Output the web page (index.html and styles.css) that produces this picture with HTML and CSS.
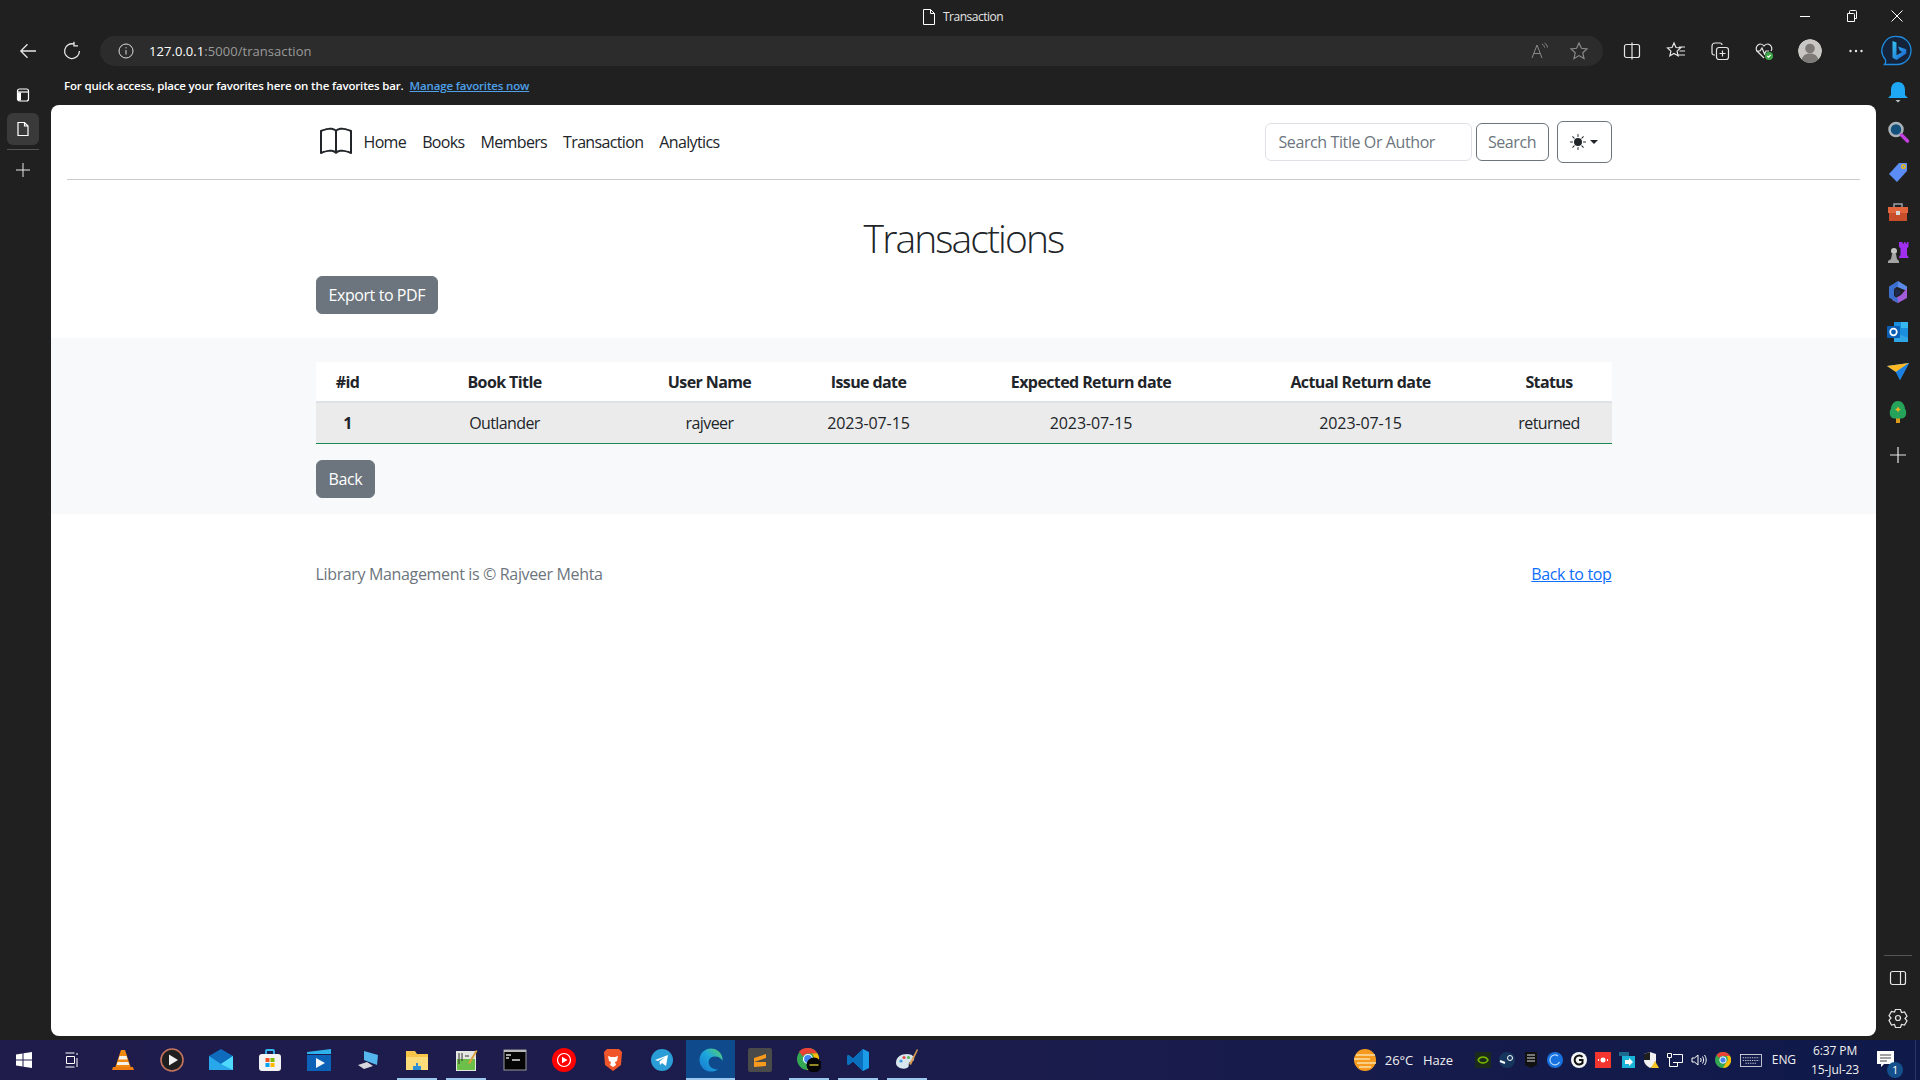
FILE: index.html
```html
<!DOCTYPE html>
<html lang="en">
<head>
  <meta charset="UTF-8">
  <title>Transaction</title>
  <link rel="stylesheet" href="styles.css">
</head>
<body>
  <div class="titlebar">
    <div class="tab-title">
      <svg class="ico-16" viewBox="0 0 16 16" fill="none" stroke="#fff" stroke-width="1"><path d="M2.500 .5h7l4 4v11h-11zM9.500 .5v4h4"/></svg>
      <span>Transaction</span>
    </div>
    <div class="win-controls">
      <svg class="ico-16" viewBox="0 0 16 16" stroke="#fff" stroke-width="1"><path d="M3 8.500h10"/></svg>
      <svg class="ico-16" viewBox="0 0 16 16" fill="none" stroke="#fff" stroke-width="1"><path d="M4.500 5.500h6a1 1 0 0 1 1 1v7h-7zM6.500 5V3.500a1 1 0 0 1 1-1h5a1 1 0 0 1 1 1v7h-2"/></svg>
      <svg class="ico-16" viewBox="0 0 16 16" stroke="#fff" stroke-width="1"><path d="M2.500 2.500l11 11M13.500 2.500l-11 11"/></svg>
    </div>
  </div>

  <div class="toolbar">
    <button class="tool-btn back-btn">
      <svg class="ico-20" viewBox="0 0 20 20" fill="none" stroke="#e6e6e6" stroke-width="1.300"><path d="M18 10H3M9.500 3.200L2.800 10l6.700 6.800"/></svg>
    </button>
    <button class="tool-btn">
      <svg class="ico-20" viewBox="0 0 20 20" fill="none" stroke="#e6e6e6" stroke-width="1.300"><path d="M12.500 3.200A7.400 7.400 0 1 0 17.400 10M12 .8v4h4"/></svg>
    </button>
    <div class="address">
      <svg class="ico-16" viewBox="0 0 16 16" fill="none" stroke="#dcdcdc" stroke-width="1"><circle cx="8" cy="8" r="7"/><path d="M8 7v4.500M8 4.200v1.200"/></svg>
      <span class="url"><b>127.0.0.1</b>:5000/transaction</span>
      <svg class="ico-20 addr-read" viewBox="0 0 20 20" fill="none" stroke="#8a8a8a" stroke-width="1"><path d="M3 17L8 4l5 13M5 12.500h6M13 3c1.500.8 2.300 2 2.500 3.600M15.500 2c1.700 1 2.700 2.500 3 4.500"/></svg>
      <svg class="ico-20 addr-star" viewBox="0 0 20 20" fill="none" stroke="#8a8a8a" stroke-width="1.200"><path d="M10 2l2.400 5.300 5.600.6-4.200 3.900 1.200 5.700-5-2.900-5 2.900 1.200-5.700L2 7.900l5.600-.6z"/></svg>
    </div>
    <div class="tool-icons">
      <svg class="ico-20" viewBox="0 0 20 20" fill="none" stroke="#e6e6e6" stroke-width="1.200"><rect x="2.500" y="3.500" width="15" height="13" rx="2"/><path d="M10 1.500v17"/></svg>
      <svg class="ico-20" viewBox="0 0 20 20" fill="none" stroke="#e6e6e6" stroke-width="1.200"><path d="M8 2l2 4.500 4.500.5-3.400 3.100 1 4.700L8 12.400l-4.100 2.400 1-4.700L1.500 7 6 6.500zM13 6h6M13.500 10H19M12.500 14H19"/></svg>
      <svg class="ico-20" viewBox="0 0 20 20" fill="none" stroke="#e6e6e6" stroke-width="1.200"><path d="M5 14H4a2 2 0 0 1-2-2V5a3 3 0 0 1 3-3h5a2 2 0 0 1 2 2"/><rect x="6.500" y="6.500" width="12" height="12" rx="2.500"/><path d="M12.500 9.500v6M9.500 12.500h6"/></svg>
      <svg class="ico-20" viewBox="0 0 20 20" fill="none" stroke="#e6e6e6" stroke-width="1.200"><path d="M10 17L3 10a4.300 4.300 0 0 1 7-5 4.300 4.300 0 0 1 7 5M2 10h4l2-3 2.500 6 1.500-3h3"/><circle cx="15" cy="15" r="4" fill="#3fa648" stroke="none"/><path d="M13.300 15l1.200 1.200 2.200-2.400" stroke="#fff"/></svg>
      <svg class="avatar" viewBox="0 0 24 24"><circle cx="12" cy="12" r="12" fill="#c9c7c4"/><circle cx="12" cy="9.500" r="4.800" fill="#7d7a77"/><path d="M3.500 20.500c1.500-4.500 5-6 8.500-6s7 1.500 8.500 6a12 12 0 0 1-17 0z" fill="#7d7a77"/></svg>
      <svg class="ico-20" viewBox="0 0 20 20" fill="#e6e6e6"><circle cx="4.500" cy="10" r="1.200"/><circle cx="10" cy="10" r="1.200"/><circle cx="15.500" cy="10" r="1.200"/></svg>
      <svg class="bing" viewBox="0 0 32 32">
        <defs><linearGradient id="bingFill" x1="0" y1="0" x2="1" y2="1"><stop offset="0" stop-color="#36c3f0"/><stop offset="1" stop-color="#1a5fd0"/></linearGradient></defs>
        <path d="M16 1.500a14 14 0 0 1 14 14c0 8-6.500 14-14 14H3.500c1.500-1.500 1.500-3 .8-5A14 14 0 0 1 16 1.500z" fill="#14233a" stroke="#1e8be0" stroke-width="1.300"/>
        <path d="M11.500 6l4 1.400v12.800l5.800-3.300-2.600-1.300-1.700-4.200 8.300 2.900v4.300L15.500 25l-4-2.200z" fill="url(#bingFill)"/>
      </svg>
    </div>
  </div>

  <div class="workspace">
    <aside class="left-rail">
      <button class="rail-btn">
        <svg class="ico-16" viewBox="0 0 16 16" fill="none" stroke="#fff" stroke-width="1.200"><rect x="2.500" y="2" width="11" height="12" rx="2"/><path d="M2.500 5h11"/><path d="M3 5.500h3v8H3z" fill="#fff" stroke="none"/></svg>
      </button>
      <button class="rail-btn active">
        <svg class="ico-16" viewBox="0 0 16 16" fill="none" stroke="#fff" stroke-width="1.200"><path d="M3 1.500h6.500l3.500 3.500v9.500H3zM9.500 1.500V5H13"/></svg>
      </button>
      <div class="rail-line"></div>
      <button class="rail-btn">
        <svg class="ico-16" viewBox="0 0 16 16" stroke="#e6e6e6" stroke-width="1"><path d="M8 1v14M1 8h14"/></svg>
      </button>
    </aside>

    <div class="center">
      <div class="favbar">
        <span>For quick access, place your favorites here on the favorites bar.</span>
        <a href="#" class="fav-link">Manage favorites now</a>
      </div>

      <main class="page">
        <header class="site-head">
          <div class="container head-row">
            <nav class="main-nav">
              <svg class="brand" viewBox="0 0 16 16" fill="#212529"><path d="M1 2.828c.885-.37 2.154-.769 3.388-.893 1.33-.134 2.458.063 3.112.752v9.746c-.935-.53-2.12-.603-3.213-.493-1.18.12-2.37.461-3.287.811V2.828zm7.500-.141c.654-.689 1.782-.886 3.112-.752 1.234.124 2.503.523 3.388.893v9.923c-.918-.35-2.107-.692-3.287-.81-1.094-.111-2.278-.039-3.213.492V2.687zM8 1.783C7.015.936 5.587.81 4.287.94c-1.514.153-3.042.672-3.994 1.105A.5.5 0 0 0 0 2.500v11a.5.5 0 0 0 .707.455c.882-.4 2.303-.881 3.680-1.020 1.409-.142 2.590.087 3.223.877a.5.5 0 0 0 .78 0c.633-.79 1.814-1.019 3.222-.877 1.378.139 2.800.62 3.681 1.020A.5.5 0 0 0 16 13.500v-11a.5.5 0 0 0-.293-.455c-.952-.433-2.480-.952-3.994-1.105C10.413.809 8.985.936 8 1.783z"/></svg>
              <a href="#">Home</a>
              <a href="#">Books</a>
              <a href="#">Members</a>
              <a href="#">Transaction</a>
              <a href="#">Analytics</a>
            </nav>
            <form class="search-form">
              <input type="text" class="search-input" placeholder="Search Title Or Author">
              <button type="button" class="btn-outline">Search</button>
            </form>
            <button class="theme-btn">
              <svg class="ico-16" viewBox="0 0 16 16" fill="#212529"><path d="M8 12a4 4 0 1 0 0-8 4 4 0 0 0 0 8zM8 0a.5.5 0 0 1 .5.5v2a.5.5 0 0 1-1 0v-2A.5.5 0 0 1 8 0zm0 13a.5.5 0 0 1 .5.5v2a.5.5 0 0 1-1 0v-2A.5.5 0 0 1 8 13zm8-5a.5.5 0 0 1-.5.5h-2a.5.5 0 0 1 0-1h2a.5.5 0 0 1 .5.5zM3 8a.5.5 0 0 1-.5.5h-2a.5.5 0 0 1 0-1h2A.5.5 0 0 1 3 8zm10.657-5.657a.5.5 0 0 1 0 .707l-1.414 1.415a.5.5 0 1 1-.707-.708l1.414-1.414a.5.5 0 0 1 .707 0zm-9.193 9.193a.5.5 0 0 1 0 .707L3.050 13.657a.5.5 0 0 1-.707-.707l1.414-1.414a.5.5 0 0 1 .707 0zm9.193 2.121a.5.5 0 0 1-.707 0l-1.414-1.414a.5.5 0 0 1 .707-.707l1.414 1.414a.5.5 0 0 1 0 .707zM4.464 4.465a.5.5 0 0 1-.707 0L2.343 3.050a.5.5 0 1 1 .707-.707l1.414 1.414a.5.5 0 0 1 0 .708z"/></svg>
              <span class="caret"></span>
            </button>
          </div>
        </header>

        <section class="container intro">
          <h1>Transactions</h1>
          <button class="btn-grey">Export to PDF</button>
        </section>

        <section class="band">
          <div class="container">
            <table class="records">
              <colgroup>
                <col class="c-id"><col class="c-book"><col class="c-user"><col class="c-issue"><col class="c-exp"><col class="c-act"><col class="c-status">
              </colgroup>
              <thead>
                <tr>
                  <th>#id</th>
                  <th>Book Title</th>
                  <th>User Name</th>
                  <th>Issue date</th>
                  <th>Expected Return date</th>
                  <th>Actual Return date</th>
                  <th>Status</th>
                </tr>
              </thead>
              <tbody>
                <tr>
                  <th>1</th>
                  <td>Outlander</td>
                  <td>rajveer</td>
                  <td class="date-cell">2023-07-15</td>
                  <td class="date-cell">2023-07-15</td>
                  <td class="date-cell">2023-07-15</td>
                  <td>returned</td>
                </tr>
              </tbody>
            </table>
            <button class="btn-grey back-link">Back</button>
          </div>
        </section>

        <footer class="container site-foot">
          <span>Library Management is © Rajveer Mehta</span>
          <a href="#">Back to top</a>
        </footer>
      </main>
    </div>

    <aside class="right-rail">
      <svg class="rail-ico" viewBox="0 0 24 24"><path d="M12 2c5 0 7 4 7 8v5l3 3H2l3-3v-5c0-4 2-8 7-8z" fill="#1ea7f2"/><path d="M9.500 20h5l-2.500 2.500z" fill="#b9c4cc"/></svg>
      <svg class="rail-ico" viewBox="0 0 24 24"><circle cx="10" cy="9.500" r="6.500" fill="#14507c" stroke="#a9b2b8" stroke-width="2.500"/><path d="M15.500 15l6 6" stroke="#c33fe0" stroke-width="3.500" stroke-linecap="round"/></svg>
      <svg class="rail-ico" viewBox="0 0 24 24"><path d="M13 3h8v8L11 22l-8-8z" fill="#5c8cf5"/><circle cx="17.500" cy="6.500" r="1.800" fill="none" stroke="#f2b90f" stroke-width="1.400"/></svg>
      <svg class="rail-ico" viewBox="0 0 24 24"><path d="M8 7V4h8v3" fill="none" stroke="#9aa0a6" stroke-width="1.500"/><path d="M2 7h20v6H2z" fill="#e2653c"/><path d="M3 13h18v8H3z" fill="#c84d2b"/><rect x="10" y="11" width="4" height="4" fill="#d9d9d9"/></svg>
      <svg class="rail-ico" viewBox="0 0 24 24"><path d="M15 2h1.500v1.500H18V2h1.500v1.500H21V2h1.500v5l-1.500 1v7l1.500 2v1H13v-1l1.500-2V8L13 7V2z" fill="#a02ff0"/><circle cx="8" cy="11" r="3" fill="#c4c4c4"/><path d="M6 14h4l1 5 2 2v2H2v-2l3-2z" fill="#a3a3a3"/></svg>
      <svg class="rail-ico" viewBox="0 0 24 24"><path d="M12 1l9 5.500v4.500L9 6z" fill="#5b8be8"/><path d="M21 8v10l-9 5-6-3 9-5z" fill="#a15ed8"/><path d="M3 6.500L12 1v5l-4 3v7l4 3v4L3 17.500z" fill="#3b6fd0"/><path d="M9 8l6 3.500v2L9 17z" fill="#1f2b4a"/></svg>
      <svg class="rail-ico" viewBox="0 0 24 24"><path d="M8 2h14v20H8z" fill="#1b8ede"/><path d="M15 2h7v6h-7z" fill="#36b7ee"/><path d="M8 12l14 6v4H8z" fill="#30a6e6"/><rect x="1" y="6" width="13" height="12" rx="1" fill="#0a5fb4"/><circle cx="7.500" cy="12" r="3.300" fill="none" stroke="#fff" stroke-width="1.700"/></svg>
      <svg class="rail-ico" viewBox="0 0 24 24"><path d="M1 6l22-3-9 17-4-8z" fill="#3da0f2"/><path d="M1 6l9 6 13-9z" fill="#fbb824"/><path d="M10 12l13-9-9 17z" fill="#1a7fe0"/></svg>
      <svg class="rail-ico" viewBox="0 0 24 24"><rect x="10" y="18" width="4" height="5" fill="#e09a1a"/><path d="M12 1c5 0 7 5 7 8 2 1.500 2 9-3 9.500H8C3 18 3 10.500 5 9c0-3 2-8 7-8z" fill="#25a35a"/><path d="M12 6.500l1 2 2 1-2 1-1 2-1-2-2-1 2-1z" fill="#f3b41f"/></svg>
      <svg class="rail-ico rail-add" viewBox="0 0 24 24" stroke="#e6e6e6" stroke-width="1.200"><path d="M12 4v16M4 12h16"/></svg>
      <div class="rail-bottom">
        <div class="rail-line wide"></div>
        <svg class="rail-ico" viewBox="0 0 24 24" fill="none" stroke="#e6e6e6" stroke-width="1.200"><rect x="4.500" y="5.500" width="15" height="13" rx="2"/><path d="M14.500 5.500v13"/></svg>
        <svg class="rail-ico" viewBox="0 0 24 24" fill="none" stroke="#e6e6e6" stroke-width="1.200"><path d="M9.500 3.500h5l1 3 3-.6 2.500 4.300-2 2.300 2 2.300-2.500 4.300-3-.6-1 3h-5l-1-3-3 .6L3 14.300l2-2.300-2-2.300 2.500-4.300 3 .6z"/><circle cx="12" cy="12" r="2.500"/></svg>
      </div>
    </aside>
  </div>

  <div class="taskbar">
    <div class="task-left">
      <div class="task-item start">
        <svg class="ico-16" viewBox="0 0 16 16" fill="#fff"><path d="M0 2.500l6.500-1v6H0zM7.500 1.300L16 0v7.500H7.500zM0 8.500h6.500v6l-6.500-1zM7.500 8.500H16V16l-8.500-1.300z"/></svg>
      </div>
      <div class="task-item start">
        <svg class="ico-16" viewBox="0 0 16 16" fill="none" stroke="#fff" stroke-width="1"><path d="M1.500 1h9M1.500 15h9M2.500 4.500h8v7h-8zM13 1v2M13 6v9"/></svg>
      </div>
      <div class="task-item">
        <svg class="ico-24" viewBox="0 0 24 24"><path d="M10 2h4l6 18H4z" fill="#f28a12"/><path d="M8.500 8h7l1 3.500H7.500zM6.600 14h10.800l.8 3H5.800z" fill="#f4f0ea"/><path d="M2 19h20l1 3H1z" fill="#ee7c0e"/></svg>
      </div>
      <div class="task-item">
        <svg class="ico-24" viewBox="0 0 24 24"><circle cx="12" cy="12" r="11" fill="#1f1f1f" stroke="#c2745f" stroke-width="1.600"/><path d="M9 6.500l9 5.500-9 5.500z" fill="#f2f2f2"/></svg>
      </div>
      <div class="task-item">
        <svg class="ico-24" viewBox="0 0 24 24"><path d="M12 1L0 8v14h24V8z" fill="#0f6cbd"/><path d="M0 8l12 8 12-8v14H0z" fill="#28a8ea"/><path d="M12 16l12-8v14z" fill="#50d9ff"/></svg>
      </div>
      <div class="task-item">
        <svg class="ico-24" viewBox="0 0 24 24"><path d="M8 6V3a1 1 0 0 1 1-1h6a1 1 0 0 1 1 1v3" fill="none" stroke="#35b8f2" stroke-width="1.800"/><rect x="1" y="6" width="22" height="17" rx="3" fill="#f3f3f3"/><rect x="7.500" y="10" width="4" height="4" fill="#f25022"/><rect x="12.500" y="10" width="4" height="4" fill="#7fba00"/><rect x="7.500" y="15" width="4" height="4" fill="#00a4ef"/><rect x="12.500" y="15" width="4" height="4" fill="#ffb900"/></svg>
      </div>
      <div class="task-item">
        <svg class="ico-24" viewBox="0 0 24 24"><path d="M0 4l24-3v5H0z" fill="#2fb2ec"/><path d="M0 7h24v16H0z" fill="#0c62b6"/><path d="M9 10l9 5-9 5z" fill="#f2f7fb"/></svg>
      </div>
      <div class="task-item">
        <svg class="ico-24" viewBox="0 0 24 24"><path d="M8 3l14 4-1 10-13-5z" fill="#55b6ee"/><path d="M2 17l9-3 6 4-9 3z" fill="#d5d8dc"/></svg>
      </div>
      <div class="task-item">
        <svg class="ico-24" viewBox="0 0 24 24"><path d="M1 3h9l2 3h11v16H1z" fill="#f6c549"/><path d="M1 9h22v13H1z" fill="#fbdc78"/><path d="M8 22v-4h3v-3h2v3h3v4z" fill="#2d8fd5"/></svg>
      </div>
      <div class="task-item">
        <svg class="ico-24" viewBox="0 0 24 24"><path d="M2 3h20v20H2z" fill="#e4e6e2"/><path d="M3 11h18v11H3z" fill="#6cc04a"/><path d="M5 5v11M8 5v8M11 8h4" stroke="#333" stroke-width="1" fill="none"/><path d="M14 15L22 2l1.500 1L16 16z" fill="#d9a23f"/></svg>
      </div>
      <div class="task-item">
        <svg class="ico-24" viewBox="0 0 24 24"><rect x="1" y="2" width="22" height="20" fill="#050505" stroke="#9b9b9b"/><path d="M1 2h22v2H1z" fill="#b9b9b9"/><path d="M3 7h5M3 10h3M9 12h8" stroke="#ddd" stroke-width="1.300"/></svg>
      </div>
      <div class="task-item">
        <svg class="ico-24" viewBox="0 0 24 24"><circle cx="12" cy="12" r="12" fill="#f00"/><circle cx="12" cy="12" r="6.500" fill="none" stroke="#fff" stroke-width="1.200"/><path d="M10 8.700l5.500 3.300-5.500 3.300z" fill="#fff"/></svg>
      </div>
      <div class="task-item">
        <svg class="ico-24" viewBox="0 0 24 24"><path d="M6 1h12l3 3-1 13-8 6-8-6-1-13z" fill="#f1562a"/><path d="M7 8l3 1h4l3-1-1 5-2 1 1 3-3 2-3-2 1-3-2-1z" fill="#fff"/></svg>
      </div>
      <div class="task-item">
        <svg class="ico-24" viewBox="0 0 24 24"><circle cx="12" cy="12" r="11" fill="#2a9dd6"/><path d="M5 12l13-5-2 11-4-3-2 2-.5-3.500 5.500-4.500-7 4z" fill="#fff"/></svg>
      </div>
      <div class="task-item edge">
        <svg class="ico-24" viewBox="0 0 24 24">
          <defs><linearGradient id="edgeFill" x1="0" y1="1" x2="1" y2="0"><stop offset="0" stop-color="#1576d0"/><stop offset=".55" stop-color="#1fa8dc"/><stop offset="1" stop-color="#5fd35f"/></linearGradient></defs>
          <circle cx="12" cy="12" r="11.500" fill="url(#edgeFill)"/>
          <path d="M24 13.500c-2-4.500-8-6.500-12-4-3.500 2.500-3 8 1 10.500 2.500 1.500 5.500 1.800 8 .8L24 24z" fill="#0e4a8c"/>
        </svg>
      </div>
      <div class="task-item">
        <svg class="ico-24" viewBox="0 0 24 24"><rect width="24" height="24" rx="2" fill="#4a4a4a"/><path d="M6 10l12-4v4l-12 4zM6 14l12 0 0 4-12 1z" fill="#f89a1c"/></svg>
      </div>
      <div class="task-item">
        <svg class="ico-24" viewBox="0 0 24 24"><circle cx="11" cy="11" r="11" fill="#34a853"/><path d="M11 0a11 11 0 0 1 9.500 5.500H11a5.500 5.500 0 0 0-5 3L2 3.500A11 11 0 0 1 11 0z" fill="#ea4335"/><path d="M20.500 5.500A11 11 0 0 1 10 22l5-8a5.500 5.500 0 0 0 0-8.500z" fill="#fbbc05"/><circle cx="11" cy="11" r="4.500" fill="#4285f4" stroke="#fff" stroke-width="1.200"/><circle cx="17" cy="17" r="7.500" fill="#050505"/><path d="M12.500 17h9" stroke="#e5d23b" stroke-width="1.300"/></svg>
      </div>
      <div class="task-item">
        <svg class="ico-24" viewBox="0 0 24 24"><path d="M17 1l6 3v16l-6 3L7 13.500 2.500 17 1 16v-8l1.500-1L7 10.500zm0 6.500L11.500 12l5.500 4.500z" fill="#1a9ce8"/><path d="M17 1l-10 9.500L2.500 7 1 8v8l1.500 1L7 13.500 17 23z" fill="#0a70bd"/></svg>
      </div>
      <div class="task-item">
        <svg class="ico-24" viewBox="0 0 24 24"><path d="M1 15C1 9 6 6 12 6c5 0 8 3 7 6-1 2-4 1-5 3s1 3-2 5c-5 2-11-1-11-5z" fill="#d8e6ee"/><circle cx="6" cy="13" r="1.600" fill="#3b9ae0"/><circle cx="9" cy="9.500" r="1.600" fill="#e34d4d"/><circle cx="13.500" cy="9.500" r="1.600" fill="#5bb55b"/><path d="M22 1l1 1-7 15-2-1z" fill="#d99a4e"/></svg>
      </div>
    </div>

    <div class="tray">
      <svg class="weather" viewBox="0 0 24 24"><circle cx="12" cy="12" r="11" fill="#f59a1e"/><path d="M3 7h19M1 11h16M4 15h19M6 19h12" stroke="#fbe0a8" stroke-width="1.700"/></svg>
      <span class="temp">26°C</span>
      <span class="haze">Haze</span>
      <div class="tray-icons">
        <svg class="ico-16" viewBox="0 0 16 16"><rect width="16" height="16" fill="#1b2a1b"/><path d="M3 8c2-4 8-4 10 0-2 4-8 4-10 0z" fill="none" stroke="#76b900" stroke-width="1.500"/></svg>
        <svg class="ico-16" viewBox="0 0 16 16"><circle cx="8" cy="8" r="8" fill="#17365e"/><circle cx="11" cy="6" r="2.500" fill="none" stroke="#fff"/><path d="M1 9l5 2" stroke="#fff" stroke-width="2"/></svg>
        <svg class="ico-16" viewBox="0 0 16 16"><path d="M2 0h12v13l-6 3-6-3z" fill="#111"/><path d="M4 3h8M4 6h8M4 9h8" stroke="#ddd" stroke-width="1.200"/></svg>
        <svg class="ico-16" viewBox="0 0 16 16"><circle cx="8" cy="8" r="8" fill="#1672e0"/><path d="M11 4a5 5 0 1 0 1.500 6" fill="none" stroke="#bcd9fa" stroke-width="1.200"/></svg>
        <svg class="ico-16" viewBox="0 0 16 16"><circle cx="8" cy="8" r="8" fill="#f5f5f5"/><path d="M11.500 5a4.500 4.500 0 1 0 0 6V8H8" fill="none" stroke="#111" stroke-width="2"/></svg>
        <svg class="ico-16" viewBox="0 0 16 16"><rect width="16" height="16" fill="#f2362f"/><circle cx="8" cy="8" r="2.500" fill="#fff"/><path d="M3 8h1M12 8h1" stroke="#fff" stroke-width="2"/></svg>
        <svg class="ico-16" viewBox="0 0 16 16"><path d="M0 0h10v4H0z" fill="#1c6b8f"/><path d="M3 4h13v12H3z" fill="#19b4d8"/><path d="M6 8h4V6l4 4-4 4v-2H6z" fill="#fff"/></svg>
        <svg class="ico-16" viewBox="0 0 16 16"><path d="M7 0l6 2v6c0 4-3 6-6 8-3-2-6-4-6-8V2z" fill="#f2f2f2"/><path d="M7 0v8H1V2z" fill="#1e1e1e"/><path d="M12 9l4 7H8z" fill="#f7c325"/></svg>
        <svg class="ico-16" viewBox="0 0 16 16" fill="none" stroke="#fff" stroke-width="1"><path d="M6 2.500h9.500v8H6M.5 1.500h4v4h-4zM2.500 5.500v9h8M10.500 10.500v4"/></svg>
        <svg class="ico-16" viewBox="0 0 16 16" fill="none" stroke="#fff" stroke-width="1"><path d="M1 6h2.500L7 3v10l-3.500-3H1zM9.500 6c.8 1.300.8 2.700 0 4M11.500 4.500c1.500 2.300 1.500 4.700 0 7M13.500 3c2.200 3.300 2.200 6.700 0 10"/></svg>
        <svg class="ico-16" viewBox="0 0 16 16"><circle cx="8" cy="8" r="8" fill="#34a853"/><path d="M8 0a8 8 0 0 1 7 4H8a4 4 0 0 0-4 2L1.500 3A8 8 0 0 1 8 0z" fill="#ea4335"/><path d="M15 4a8 8 0 0 1-7 12l3.500-6a4 4 0 0 0 0-6z" fill="#fbbc05"/><circle cx="8" cy="8" r="3.200" fill="#4285f4" stroke="#fff"/></svg>
      </div>
      <svg class="keyboard" viewBox="0 0 24 14" fill="none" stroke="#fff" stroke-width=".8"><rect x=".5" y=".5" width="23" height="13"/><path d="M3 4h18M3 7h18M6 10h12" stroke-dasharray="1.500 1"/></svg>
      <span class="lang">ENG</span>
      <div class="clock"><span>6:37 PM</span><span>15-Jul-23</span></div>
      <div class="notify">
        <svg class="ico-20" viewBox="0 0 20 20"><path d="M1 1h17v13H8l-3 3v-3H1z" fill="#fff"/><path d="M4 5h11M4 8h11M4 11h7" stroke="#444" stroke-width="1"/></svg>
        <span class="badge">1</span>
      </div>
    </div>
  </div>
</body>
</html>
```

FILE: styles.css
```css
* {
  box-sizing: border-box;
}

body {
  margin: 0;
  width: 1920px;
  height: 1080px;
  overflow: hidden;
  display: flex;
  flex-direction: column;
  background: #202020;
  color: #212529;
  font-family: "Open Sans", "Noto Sans", sans-serif;
  font-size: 16px;
  letter-spacing: -0.35px;
  line-height: 24px;
}

button {
  font-family: inherit;
  letter-spacing: -0.42px;
}

svg {
  display: block;
  flex: none;
}

.ico-16 { width: 16px; height: 16px; }
.ico-20 { width: 20px; height: 20px; }
.ico-24 { width: 24px; height: 24px; }

/* browser chrome */
.titlebar {
  height: 33px;
  display: flex;
  align-items: center;
  justify-content: center;
  position: relative;
  color: #e6e6e6;
  font-size: 12px;
  letter-spacing: -0.5px;
}

.tab-title {
  display: flex;
  align-items: center;
  gap: 6px;
  margin-left: 4px;
}

.win-controls {
  position: absolute;
  right: 15px;
  top: 8px;
  display: flex;
  gap: 30px;
}

.toolbar {
  height: 36px;
  display: flex;
  align-items: center;
  padding-left: 10px;
}

.tool-btn {
  width: 36px;
  height: 30px;
  margin-right: 8px;
  padding: 0;
  border: 0;
  background: none;
  display: flex;
  align-items: center;
  justify-content: center;
}

.address {
  flex: none;
  width: 1503px;
  height: 30px;
  margin-left: 2px;
  padding: 0 14px 0 18px;
  border-radius: 15px;
  background: #2c2c2c;
  display: flex;
  align-items: center;
  gap: 15px;
}

.url {
  color: #9a9a9a;
  font-size: 13px;
  letter-spacing: 0.05px;
}

.url b {
  color: #fff;
  font-weight: 400;
}

.addr-read {
  margin-left: auto;
}

.addr-star {
  margin-left: 5px;
}

.tool-icons {
  display: flex;
  align-items: center;
  gap: 24px;
  margin-left: 19px;
}

.avatar {
  width: 24px;
  height: 24px;
  border-radius: 50%;
}

.bing {
  width: 32px;
  height: 32px;
  margin-left: -9px;
}

.workspace {
  flex: 1;
  min-height: 0;
  display: flex;
}

.left-rail {
  width: 51px;
  padding: 10px 0 0 7px;
  display: flex;
  flex-direction: column;
  gap: 2px;
}

.rail-btn {
  width: 32px;
  height: 32px;
  padding: 0;
  border: 0;
  border-radius: 6px;
  background: none;
  display: flex;
  align-items: center;
  justify-content: center;
}

.rail-btn.active {
  background: #3a3a3a;
}

.rail-line {
  width: 32px;
  height: 1px;
  margin: 2px 0 2px;
  background: #555;
}

.rail-line.wide {
  width: 28px;
  margin: 0 0 2px;
}

.center {
  width: 1825px;
  display: flex;
  flex-direction: column;
}

.favbar {
  height: 36px;
  padding: 0 0 2px 13px;
  display: flex;
  align-items: center;
  gap: 6px;
  color: #fff;
  font-size: 11.5px;
  font-weight: 600;
  letter-spacing: -0.16px;
}

.fav-link {
  color: #4ea1ea;
}

.right-rail {
  width: 44px;
  padding-top: 3px;
  display: flex;
  flex-direction: column;
  align-items: center;
}

.rail-ico {
  width: 24px;
  height: 24px;
  margin: 8px 0;
}

.rail-add {
  margin-top: 11px;
}

.rail-bottom {
  margin-top: auto;
  display: flex;
  flex-direction: column;
  align-items: center;
}

.rail-bottom .rail-ico:last-child {
  margin-bottom: 6px;
}

/* page */
.page {
  flex: 1;
  background: #fff;
  border-radius: 8px;
}

.container {
  width: 1320px;
  margin: 0 auto;
  padding: 0 12px;
}

.site-head {
  height: 75px;
  margin: 0 16px;
  border-bottom: 1px solid #ccc;
}

.head-row {
  height: 74px;
  display: flex;
  align-items: center;
}

.main-nav {
  display: flex;
  align-items: center;
  margin-right: auto;
}

.brand {
  width: 32px;
  height: 32px;
  margin: 0 4px 0 4px;
}

.main-nav a {
  padding: 0 8px;
  color: #212529;
  letter-spacing: -0.65px;
  text-decoration: none;
}

.search-form {
  display: flex;
  gap: 4px;
  margin-right: 8px;
}

.search-input {
  width: 207px;
  height: 38px;
  padding: 0 13px;
  border: 1px solid #dee2e6;
  border-radius: 6px;
  font-family: inherit;
  font-size: 16px;
  letter-spacing: -0.4px;
}

.search-input::placeholder {
  color: #6c757d;
  opacity: 1;
}

.btn-outline {
  width: 73px;
  height: 38px;
  padding: 0;
  border: 1px solid #6c757d;
  border-radius: 6px;
  background: #fff;
  color: #6c757d;
  font-size: 16px;
}

.theme-btn {
  width: 55px;
  height: 42px;
  padding: 0 12px;
  border: 1px solid #6c757d;
  border-radius: 6px;
  background: #fff;
  display: flex;
  align-items: center;
  gap: 4px;
}

.caret {
  border-top: 4.8px solid #212529;
  border-left: 4.8px solid transparent;
  border-right: 4.8px solid transparent;
}

.intro {
  height: 158px;
  padding-top: 34px;
}

h1 {
  margin: 0 0 14px;
  font-size: 39px;
  font-weight: 300;
  line-height: 48px;
  letter-spacing: -1.9px;
  text-align: center;
}

.btn-grey {
  height: 38px;
  padding: 0 12px;
  border: 1px solid #6c757d;
  border-radius: 6px;
  background: #6c757d;
  color: #fff;
  font-size: 16px;
}

.band {
  height: 176px;
  padding-top: 24px;
  background: #f8f9fa;
}

.records {
  width: 1296px;
  border-collapse: collapse;
  table-layout: fixed;
  letter-spacing: -0.6px;
  text-align: center;
}

.c-id { width: 64px; }
.c-book { width: 250px; }
.c-user { width: 160px; }
.c-issue { width: 158px; }
.c-exp { width: 287px; }
.c-act { width: 252px; }
.c-status { width: 125px; }

.records th,
.records td {
  padding: 0;
}

.records .date-cell {
  letter-spacing: -0.1px;
}

.records thead tr {
  height: 40px;
  background: #fff;
  border-bottom: 2px solid #dee2e6;
}

.records tbody tr {
  height: 41px;
  background: #ebebeb;
  border-bottom: 1px solid #198754;
}

.back-link {
  display: block;
  margin-top: 16px;
}

.site-foot {
  padding-top: 48px;
  display: flex;
  justify-content: space-between;
  color: #6c757d;
}

.site-foot a {
  color: #0d6efd;
}

/* windows taskbar */
.taskbar {
  height: 40px;
  margin-top: 4px;
  display: flex;
  justify-content: space-between;
  background: linear-gradient(90deg, #1f1c4c, #1b1c4c 50%, #0f1a4a);
  color: #f0f0f0;
  font-size: 13px;
  letter-spacing: -0.1px;
}

.task-left {
  display: flex;
}

.task-item {
  width: 49px;
  display: flex;
  align-items: center;
  justify-content: center;
}

.task-item.start {
  width: 48px;
}

.task-item.start + .task-item:not(.start) {
  margin-left: 2px;
}

.task-item:nth-child(9),
.task-item:nth-child(10),
.task-item:nth-child(17),
.task-item:nth-child(18),
.task-item:nth-child(19) {
  background: linear-gradient(#9cc8ee, #9cc8ee) center bottom / 40px 2px no-repeat;
}

.task-item.edge {
  background: linear-gradient(#9cc8ee, #9cc8ee) center bottom / 100% 2px no-repeat, #0e4a8c;
}

.tray {
  display: flex;
  align-items: center;
  margin-right: 4px;
  border-right: 1px solid #2d3560;
}

.weather {
  width: 24px;
  height: 24px;
  margin-right: 8px;
}

.haze {
  margin-left: 10px;
}

.tray-icons {
  display: flex;
  gap: 8px;
  margin-left: 22px;
}

.keyboard {
  width: 22px;
  height: 13px;
  margin-left: 9px;
}

.lang {
  margin-left: 10px;
  font-size: 12px;
}

.clock {
  width: 70px;
  margin-left: 4px;
  display: flex;
  flex-direction: column;
  align-items: center;
  font-size: 12px;
  line-height: 19px;
}

.notify {
  position: relative;
  width: 24px;
  margin: 0 15px 0 6px;
}

.badge {
  position: absolute;
  right: -3px;
  bottom: -8px;
  width: 16px;
  height: 16px;
  border-radius: 50%;
  background: #14508c;
  color: #fff;
  font-size: 11px;
  line-height: 16px;
  text-align: center;
}
```
